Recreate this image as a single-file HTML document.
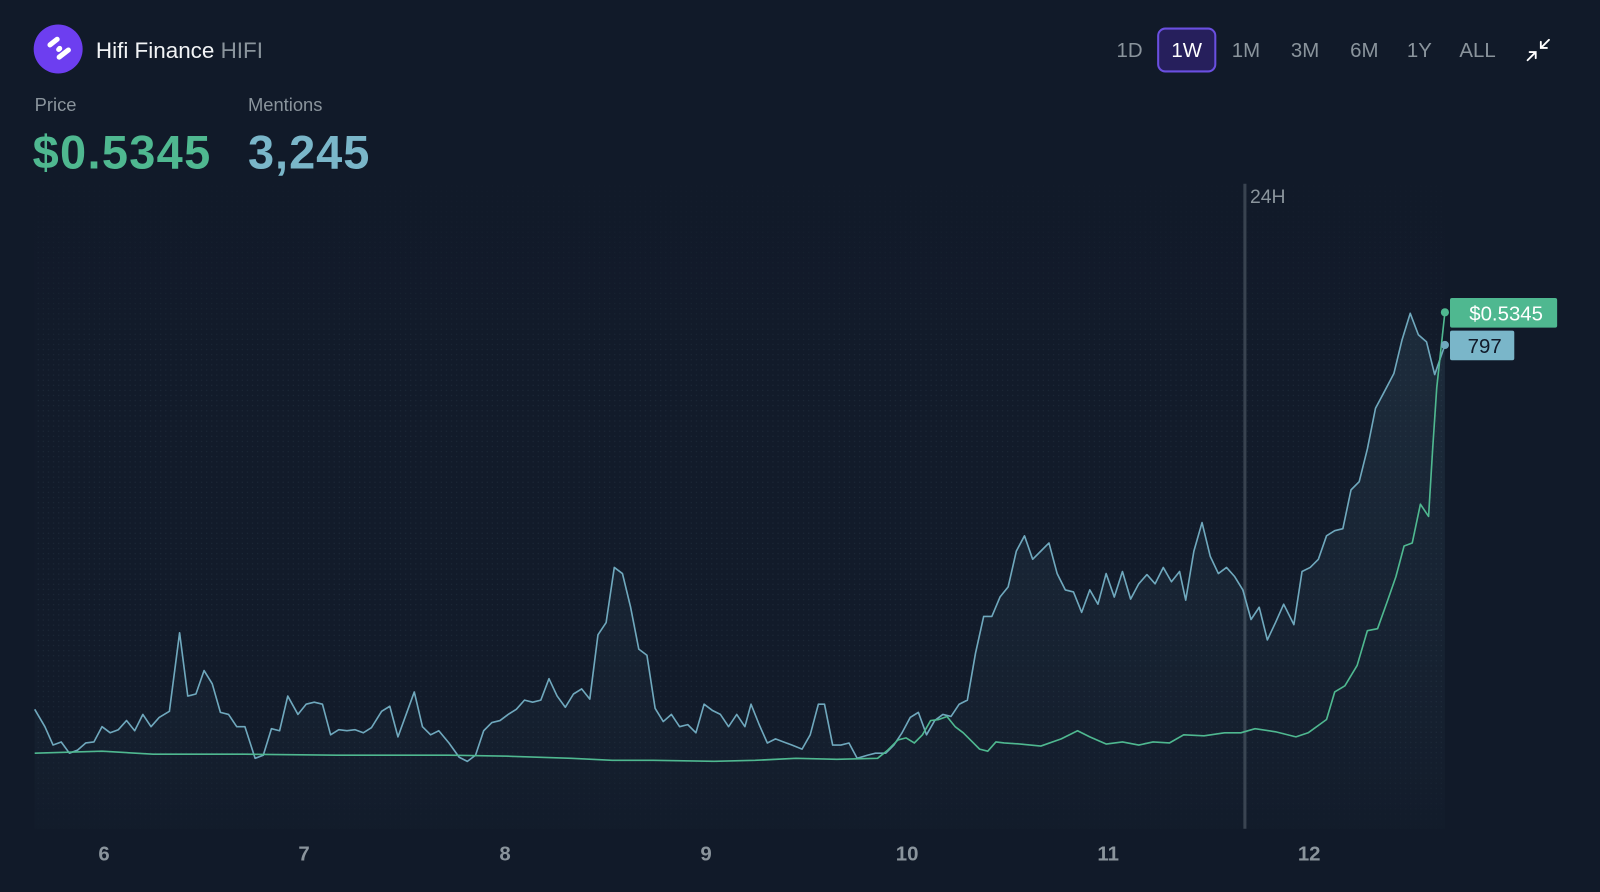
<!DOCTYPE html>
<html><head><meta charset="utf-8"><style>
html,body{margin:0;padding:0;background:#111a29;width:1600px;height:892px;overflow:hidden}
svg{display:block;font-family:"Liberation Sans",sans-serif}
</style></head><body>
<svg width="1600" height="892" viewBox="0 0 1568 874" preserveAspectRatio="none">
<defs>
<pattern id="dots" width="5" height="5" patternUnits="userSpaceOnUse"><rect width="5" height="5" fill="#121b2a"/><circle cx="2.5" cy="2.5" r="0.6" fill="#1e2a3a"/></pattern>
<linearGradient id="fg" x1="0" y1="0" x2="0" y2="1"><stop offset="0" stop-color="#6fa8bd" stop-opacity="0.12"/><stop offset="1" stop-color="#6fa8bd" stop-opacity="0.01"/></linearGradient>
<linearGradient id="fade" x1="0" y1="0" x2="0" y2="1"><stop offset="0" stop-color="#111a29" stop-opacity="0.9"/><stop offset="0.3" stop-color="#111a29" stop-opacity="0"/><stop offset="0.85" stop-color="#111a29" stop-opacity="0"/><stop offset="1" stop-color="#111a29" stop-opacity="0.9"/></linearGradient>
</defs>
<rect width="1568" height="874" fill="#111a29"/>
<rect x="34" y="180" width="1382" height="632" fill="url(#dots)"/>
<rect x="34" y="180" width="1382" height="632" fill="url(#fade)"/>
<line x1="1220" y1="180" x2="1220" y2="812" stroke="#394350" stroke-width="3"/>
<text x="1225" y="199" font-size="19" fill="#8a949c">24H</text>
<path fill="url(#fg)" d="M34,695 L44,712 52,730 60,727 68,738 76,735 84,728 92,727 100,712 108,718 116,715 124,706 132,716 140,700 148,712 156,703 166,697 176,620 184,682 192,680 200,657 208,670 216,698 224,700 232,712 240,712 250,743 258,740 266,714 274,716 282,682 292,700 300,690 308,688 316,690 324,720 332,715 340,716 348,715 356,718 364,713 374,697 382,692 390,722 398,700 406,678 414,712 422,720 430,716 440,728 450,742 458,746 466,740 474,716 482,708 490,706 498,700 506,695 514,686 522,688 530,686 538,665 546,682 554,693 562,680 570,675 578,685 586,622 594,610 602,556 610,562 618,595 626,636 634,642 642,694 650,707 658,700 666,712 674,710 682,718 690,690 698,696 706,700 714,712 722,700 730,712 736,690 744,710 752,728 760,724 768,727 776,730 786,734 794,720 802,690 808,690 816,730 824,730 832,728 840,743 850,740 858,738 868,738 876,730 884,718 892,703 900,698 908,720 916,706 924,700 932,702 940,690 948,686 956,640 964,604 972,604 980,585 988,575 996,540 1004,525 1012,548 1020,540 1028,532 1036,562 1044,578 1052,580 1060,600 1068,578 1076,592 1084,562 1092,585 1100,560 1108,587 1116,572 1124,563 1132,572 1140,556 1148,570 1156,560 1162,588 1170,540 1178,512 1186,545 1194,562 1202,556 1210,565 1218,578 1226,607 1234,595 1242,627 1250,610 1258,592 1268,612 1276,560 1284,556 1292,548 1300,525 1308,520 1316,518 1324,480 1332,472 1340,440 1348,400 1356,385 1366,366 1374,333 1382,307 1390,328 1398,335 1406,367 1416,338 L1416,812 L34,812Z"/>
<path fill="none" stroke="#6fa8bd" stroke-width="1.6" stroke-linejoin="round" d="M34,695 L44,712 52,730 60,727 68,738 76,735 84,728 92,727 100,712 108,718 116,715 124,706 132,716 140,700 148,712 156,703 166,697 176,620 184,682 192,680 200,657 208,670 216,698 224,700 232,712 240,712 250,743 258,740 266,714 274,716 282,682 292,700 300,690 308,688 316,690 324,720 332,715 340,716 348,715 356,718 364,713 374,697 382,692 390,722 398,700 406,678 414,712 422,720 430,716 440,728 450,742 458,746 466,740 474,716 482,708 490,706 498,700 506,695 514,686 522,688 530,686 538,665 546,682 554,693 562,680 570,675 578,685 586,622 594,610 602,556 610,562 618,595 626,636 634,642 642,694 650,707 658,700 666,712 674,710 682,718 690,690 698,696 706,700 714,712 722,700 730,712 736,690 744,710 752,728 760,724 768,727 776,730 786,734 794,720 802,690 808,690 816,730 824,730 832,728 840,743 850,740 858,738 868,738 876,730 884,718 892,703 900,698 908,720 916,706 924,700 932,702 940,690 948,686 956,640 964,604 972,604 980,585 988,575 996,540 1004,525 1012,548 1020,540 1028,532 1036,562 1044,578 1052,580 1060,600 1068,578 1076,592 1084,562 1092,585 1100,560 1108,587 1116,572 1124,563 1132,572 1140,556 1148,570 1156,560 1162,588 1170,540 1178,512 1186,545 1194,562 1202,556 1210,565 1218,578 1226,607 1234,595 1242,627 1250,610 1258,592 1268,612 1276,560 1284,556 1292,548 1300,525 1308,520 1316,518 1324,480 1332,472 1340,440 1348,400 1356,385 1366,366 1374,333 1382,307 1390,328 1398,335 1406,367 1416,338"/>
<path fill="none" stroke="#4fb890" stroke-width="1.6" stroke-linejoin="round" d="M34,738 L100,736 150,739 240,739 330,740 440,740 500,741 560,743 600,745 640,745 700,746 740,745 780,743 820,744 860,743 870,735 880,725 888,723 896,728 904,720 912,706 920,705 928,702 936,712 944,718 952,726 960,734 968,736 976,727 984,728 1000,729 1020,731 1040,724 1056,716 1068,722 1084,729 1100,727 1116,730 1130,727 1146,728 1160,720 1180,721 1200,718 1216,718 1230,714 1250,717 1270,722 1282,718 1300,705 1308,678 1318,672 1330,652 1340,618 1350,616 1360,588 1368,565 1376,535 1384,532 1392,494 1400,506 1404,440 1408,380 1416,306"/>
<circle cx="1416" cy="306" r="4" fill="#4fb890"/>
<circle cx="1416" cy="338" r="4" fill="#6fa8bd"/>
<rect x="1421" y="292" width="105" height="29" rx="2" fill="#4fb890"/>
<text x="1476" y="314" font-size="20" fill="#fff" text-anchor="middle">$0.5345</text>
<rect x="1421" y="324" width="63" height="29" rx="2" fill="#7ab6c9"/>
<text x="1455" y="346" font-size="20" fill="#111a29" text-anchor="middle">797</text>
<g font-size="20" font-weight="bold" fill="#8a949c" text-anchor="middle">
<text x="102" y="843">6</text><text x="298" y="843">7</text><text x="495" y="843">8</text><text x="692" y="843">9</text><text x="889" y="843">10</text><text x="1086" y="843">11</text><text x="1283" y="843">12</text>
</g>
<circle cx="57" cy="48" r="24" fill="#6d3ef0"/>
<g stroke="#fff" stroke-width="5" stroke-linecap="round"><line x1="49" y1="44" x2="56" y2="38.5"/><line x1="57.5" y1="48.5" x2="58.5" y2="47.5"/><line x1="58" y1="56" x2="67" y2="49"/></g>
<text x="94" y="57" font-size="22" fill="#f2f4f6">Hifi Finance <tspan fill="#8a949c">HIFI</tspan></text>
<text x="34" y="109" font-size="18" fill="#8a949c">Price</text>
<text x="243" y="109" font-size="18" fill="#8a949c">Mentions</text>
<text x="32" y="165" font-size="46" font-weight="bold" fill="#4fb890" textLength="174" lengthAdjust="spacing">$0.5345</text>
<text x="243" y="165" font-size="46" font-weight="bold" fill="#7ab6c9" textLength="119" lengthAdjust="spacing">3,245</text>
<rect x="1135" y="28" width="56" height="42" rx="7" fill="#261f5c" stroke="#6a4fe0" stroke-width="2"/>
<g font-size="20" fill="#8a949c" text-anchor="middle">
<text x="1107" y="56">1D</text><text x="1163" y="56" fill="#fff">1W</text><text x="1221" y="56">1M</text><text x="1279" y="56">3M</text><text x="1337" y="56">6M</text><text x="1391" y="56">1Y</text><text x="1448" y="56">ALL</text>
</g>
<g stroke="#fff" stroke-width="1.8" fill="none" stroke-linecap="round"><path d="M1497,59 L1505,51 M1499,51 H1505 V57"/><path d="M1518,39 L1510,47 M1510,41 V47 H1516"/></g>
</svg>
</body></html>
